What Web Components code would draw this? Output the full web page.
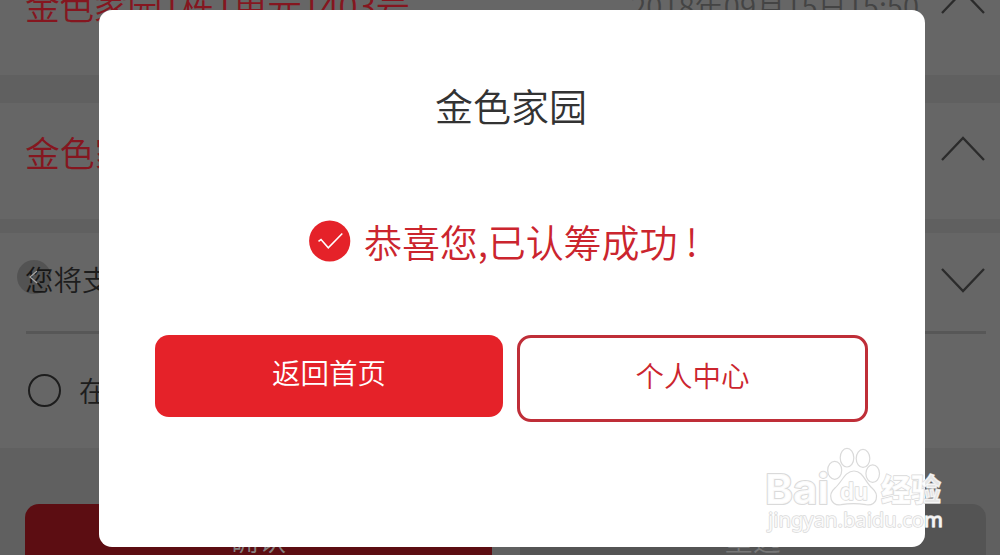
<!DOCTYPE html>
<html lang="zh-CN">
<head>
<meta charset="utf-8">
<title>金色家园</title>
<style>
    html, body {
        margin: 0;
        width: 1000px;
        height: 555px;
        overflow: hidden;
        background: #606060;
    }
    body {
        position: relative;
        font-family: "Noto Sans CJK SC", "Liberation Sans", sans-serif;
        font-weight: 350;
        --red: #e52229;
        --red-text: #cb252e;
    }
</style>
</head>
<body>
<order-page></order-page>
<result-dialog>
    <span slot="title">金色家园</span>
    <span slot="message">恭喜您,已认筹成功 !</span>
    <app-button slot="actions" kind="filled">返回首页</app-button>
    <app-button slot="actions" kind="outlined">个人中心</app-button>
</result-dialog>
<back-handle></back-handle>
<site-mark></site-mark>

<script>
class AppElement extends HTMLElement{
    constructor(){
        super();
        this.attachShadow({mode: "open"});
        this.shadowRoot.innerHTML = this.constructor.markup;
    }
}

/* row arrow: direction="up" or "down" */
class RowChevron extends AppElement{
    static markup = /* html */ `
        <style>
            :host { display:block; width:46px; height:28px; flex:none; }
            :host([direction="down"]) svg { transform:scaleY(-1); }
            svg { display:block; }
            path { fill:none; stroke:#2b2b2b; stroke-width:2.3; }
        </style>
        <svg width="46" height="28"><path d="M2 26 23 4 44 26"/></svg>
    `;
}
customElements.define("row-chevron", RowChevron);

class OrderRow extends AppElement{
    static markup = /* html */ `
        <style>
            :host {
                display:flex;
                align-items:center;
                box-sizing:border-box;
                padding:0 14px 0 25px;
                background:#666;
                white-space:nowrap;
            }
            .label { flex:1; color:var(--row-color, #1d1d1d); font-size:var(--row-size, 28px); line-height:40px; }
            ::slotted([slot="date"]) { color:#444; font-size:29.3px; line-height:40px; margin-right:21px; letter-spacing:0; }
        </style>
        <slot name="icon"></slot>
        <div class="label"><slot></slot></div>
        <slot name="date"></slot>
        <slot name="chevron"></slot>
    `;
}
customElements.define("order-row", OrderRow);

class OrderPage extends AppElement{
    static markup = /* html */ `
        <style>
            :host { display:flex; flex-direction:column; height:555px; overflow:hidden; }
            order-row { flex:none; }
            .house { --row-color:#85161f; --row-size:34.8px; height:116px; }
            .house row-chevron { margin-bottom:8px; }
            .first { margin-top:-41px; padding-bottom:24px; letter-spacing:-.6px; }
            .second { margin:28px 0 14px; padding-bottom:19px; }
            .pay { height:98px; padding-bottom:7px; --row-size:28.5px; }
            .pay row-chevron { margin-top:5px; }
            .agree { height:114px; padding:0 14px 2px 28px; }
            .line { flex:none; background:#666; padding:0 14px 0 26px; }
            .line div { height:3px; background:#575757; }
            .radio {
                box-sizing:border-box;
                width:33px;
                height:33px;
                border:2px solid #1d1d1d;
                border-radius:50%;
                margin-right:18px;
            }
            .buttons { display:flex; gap:28px; padding:56px 14px 0 25px; }
            .buttons div {
                flex:1;
                height:84px;
                border-radius:14px;
                background:#545454;
                color:#777;
                font-size:28px;
                line-height:70px;
                text-align:center;
            }
            .buttons .ok { background:#5c0d12; color:#858080; }
        </style>
        <order-row class="house first">金色家园1栋1单元1403号
            <span slot="date">2018年09月15日15:50</span>
            <row-chevron slot="chevron" direction="up"></row-chevron>
        </order-row>
        <order-row class="house second">金色家
            <row-chevron slot="chevron" direction="up"></row-chevron>
        </order-row>
        <order-row class="pay">您将支
            <row-chevron slot="chevron" direction="down"></row-chevron>
        </order-row>
        <div class="line"><div></div></div>
        <order-row class="agree"><div class="radio" slot="icon"></div>在</order-row>
        <div class="buttons"><div class="ok">确认</div><div>重选</div></div>
    `;
}
customElements.define("order-page", OrderPage);

class AppButton extends AppElement{
    static markup = /* html */ `
        <style>
            :host { display:block; }
            button {
                display:block;
                box-sizing:border-box;
                width:348px;
                height:82px;
                margin:0;
                padding:0 0 9px;
                border:0;
                border-radius:14px;
                background:var(--red);
                color:#fff;
                font:inherit;
                font-size:28.5px;
            }
            :host([kind="outlined"]) button {
                width:351px;
                height:87px;
                padding:0 0 8px;
                border:3px solid #bf2e38;
                background:#fff;
                color:var(--red-text);
            }
        </style>
        <button><slot></slot></button>
    `;
}
customElements.define("app-button", AppButton);

class ResultDialog extends AppElement{
    static markup = /* html */ `
        <style>
            :host {
                position:absolute;
                left:99px;
                top:10px;
                width:826px;
                height:537px;
                display:flex;
                flex-direction:column;
                border-radius:13px;
                background:#fff;
                white-space:nowrap;
            }
            .title { margin-top:67px; font-size:38px; line-height:56px; text-align:center; color:#333; padding-right:2px; }
            .message {
                display:flex;
                align-items:center;
                gap:13px;
                margin:80px 0 0 210px;
                height:56px;
                color:var(--red-text);
                font-size:38px;
                line-height:54px;
                letter-spacing:-.1px;
            }
            .actions { display:flex; align-items:flex-start; gap:14px; margin:66px 0 0 56px; }
        </style>
        <div class="title"><slot name="title"></slot></div>
        <div class="message">
            <svg width="42" height="42">
                <circle cx="20.7" cy="21" r="20.6" fill="#e52229"/>
                <path d="M9.5 21.3 12 19.5 19.3 27.8 33.3 13.5" fill="none" stroke="#fff" stroke-width="1.6"/>
            </svg>
            <slot name="message"></slot>
        </div>
        <div class="actions"><slot name="actions"></slot></div>
    `;
}
customElements.define("result-dialog", ResultDialog);

class BackHandle extends AppElement{
    static markup = /* html */ `
        <style>
            :host { position:absolute; left:17px; top:260px; width:34px; height:34px; }
            svg { display:block; }
        </style>
        <svg width="34" height="34">
            <circle cx="17" cy="17" r="17" fill="#000" fill-opacity=".18"/>
            <path d="M20 11 13 17 20 23" fill="none" stroke="#a5a5a5" stroke-width="1.2"/>
        </svg>
    `;
}
customElements.define("back-handle", BackHandle);

class SiteMark extends AppElement{
    static markup = /* html */ `
        <style>
            :host { position:absolute; left:760px; top:440px; width:190px; height:100px; }
            svg { display:block; overflow:visible; }
            text { paint-order:stroke; stroke-linejoin:round; }
            .latin { font-family:Inter, "Liberation Sans", sans-serif; font-weight:700; }
            .cjk { font-family:"Noto Sans CJK SC", sans-serif; font-weight:900; }
            .url { font-family:"Noto Sans", sans-serif; font-weight:400; }
        </style>
        <svg width="190" height="100" fill="#fff" fill-opacity=".85" stroke="#dadada" stroke-width="1.5">
            <text class="latin" x="5" y="63.5" font-size="41" stroke-width="2" textLength="64" lengthAdjust="spacingAndGlyphs">Bai</text>
            <g stroke-width="1.2">
                <ellipse cx="74.7" cy="30.3" rx="7" ry="9"/>
                <ellipse cx="87" cy="17.7" rx="6.8" ry="9.3"/>
                <ellipse cx="103" cy="18.4" rx="6.8" ry="9"/>
                <ellipse cx="112.7" cy="33.6" rx="6.8" ry="8.8"/>
                <path d="M94 31C85 31 82 42 75 48 67 55 71 66 81 64.7 89 63.3 98 63.3 106 64.7 117 66 120 55 112 48 105 42 103 31 94 31Z"/>
            </g>
            <text class="latin" x="80" y="59.5" font-size="24" font-weight="500" textLength="28" lengthAdjust="spacingAndGlyphs">du</text>
            <text class="cjk" x="121" y="61" font-size="31" textLength="60" lengthAdjust="spacingAndGlyphs">经验</text>
            <text class="url" x="8" y="87" font-size="20" textLength="175" lengthAdjust="spacingAndGlyphs">jingyan.baidu.com</text>
        </svg>
    `;
}
customElements.define("site-mark", SiteMark);
</script>
</body>
</html>
